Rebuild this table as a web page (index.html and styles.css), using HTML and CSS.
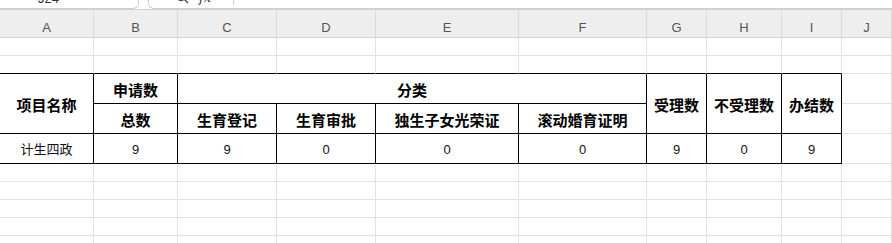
FILE: index.html
```html
<!DOCTYPE html>
<html lang="zh-CN">
<head>
    <meta charset="UTF-8">
    <title>计生四政统计表</title>
    <link rel="stylesheet" href="styles.css">
</head>
<body>

    <div class="barra">
        <div class="caixaNome">J24</div>
        <div class="caixaFormula">
            <svg class="lupa" width="14" height="14" viewBox="0 0 14 14">
                <circle cx="6" cy="6" r="4.5" fill="none" stroke="#444" stroke-width="1.3"/>
                <line x1="9.3" y1="9.3" x2="13" y2="13" stroke="#444" stroke-width="1.3"/>
            </svg>
            <span class="fx">fx</span>
            <span class="separador"></span>
        </div>
    </div>

    <div class="planilha">
        <!-- cabeçalho das colunas -->
        <div class="cab">A</div>
        <div class="cab">B</div>
        <div class="cab">C</div>
        <div class="cab">D</div>
        <div class="cab">E</div>
        <div class="cab">F</div>
        <div class="cab">G</div>
        <div class="cab">H</div>
        <div class="cab">I</div>
        <div class="cab">J</div>

        <!-- linhas vazias -->
        <div class="c"></div><div class="c"></div><div class="c"></div><div class="c"></div><div class="c"></div>
        <div class="c"></div><div class="c"></div><div class="c"></div><div class="c"></div><div class="c"></div>

        <div class="c topo"></div><div class="c topo"></div><div class="c topo"></div><div class="c topo"></div><div class="c topo"></div>
        <div class="c topo"></div><div class="c topo"></div><div class="c topo"></div><div class="c topo"></div><div class="c"></div>

        <!-- tabela -->
        <div class="c t tit dupla">项目名称</div>
        <div class="c t tit">申请数</div>
        <div class="c t tit quatro">分类</div>
        <div class="c t tit dupla">受理数</div>
        <div class="c t tit dupla">不受理数</div>
        <div class="c t tit dupla">办结数</div>
        <div class="c"></div>

        <div class="c t tit">总数</div>
        <div class="c t tit">生育登记</div>
        <div class="c t tit">生育审批</div>
        <div class="c t tit">独生子女光荣证</div>
        <div class="c t tit">滚动婚育证明</div>
        <div class="c"></div>

        <div class="c t">计生四政</div>
        <div class="c t">9</div>
        <div class="c t">9</div>
        <div class="c t">0</div>
        <div class="c t">0</div>
        <div class="c t">0</div>
        <div class="c t">9</div>
        <div class="c t">0</div>
        <div class="c t">9</div>
        <div class="c"></div>

        <div class="c"></div><div class="c"></div><div class="c"></div><div class="c"></div><div class="c"></div>
        <div class="c"></div><div class="c"></div><div class="c"></div><div class="c"></div><div class="c"></div>
        <div class="c"></div><div class="c"></div><div class="c"></div><div class="c"></div><div class="c"></div>
        <div class="c"></div><div class="c"></div><div class="c"></div><div class="c"></div><div class="c"></div>
        <div class="c"></div><div class="c"></div><div class="c"></div><div class="c"></div><div class="c"></div>
        <div class="c"></div><div class="c"></div><div class="c"></div><div class="c"></div><div class="c"></div>
        <div class="c"></div><div class="c"></div><div class="c"></div><div class="c"></div><div class="c"></div>
        <div class="c"></div><div class="c"></div><div class="c"></div><div class="c"></div><div class="c"></div>
        <div class="c"></div><div class="c"></div><div class="c"></div><div class="c"></div><div class="c"></div>
        <div class="c"></div><div class="c"></div><div class="c"></div><div class="c"></div><div class="c"></div>
    </div>

</body>
</html>
```

FILE: styles.css
```css
body{
    margin: 0;
    overflow: hidden;
    background: #fff;
    font-family: "Liberation Sans", "Noto Sans CJK SC", sans-serif;
}

/* barra de fórmula (só a parte de baixo aparece) */
.barra{
    display: flex;
    height: 30px;
    margin-top: -21px;
    gap: 9px;
}
.caixaNome,
.caixaFormula{
    box-sizing: border-box;
    height: 30px;
    border: solid 1px #d0d0d0;
    background: #fff;
    font-size: 13px;
    color: #333;
}
.caixaNome{
    width: 139px;
    border-left: none;
    border-radius: 0 0 6px 0;
    padding: 11px 0 0 38px;
}
.caixaFormula{
    flex: 1;
    border-right: none;
    border-radius: 0 0 0 6px;
    display: flex;
    align-items: flex-start;
    padding: 9px 0 0 26px;
    gap: 10px;
}
.lupa{ margin-top: 1px; }
.fx{
    font-style: italic;
    font-family: "DejaVu Serif", serif;
    font-size: 13px;
    margin-top: 1px;
}
.separador{
    width: 1px;
    height: 14px;
    margin: 2px 0 0 12px;
    background: #ccc;
}

/* grade */
.planilha{
    display: grid;
    grid-template-columns: 94px 84px 99px 99px 143px 128px 60px 75px 60px 1fr;
    grid-template-rows: 28px 18px 18px 30px 30px 30px 18px 18px 18px 18px 18px;
    border-top: solid 1px #cfcfcf;
}

.cab{
    box-sizing: border-box;
    background: #eeeeee;
    border-right: solid 1px #dadada;
    border-bottom: solid 1px #d6d6d6;
    color: #555;
    font-size: 13px;
    display: flex;
    justify-content: center;
    align-items: center;
    padding-top: 8px;
}

.c{
    box-sizing: border-box;
    border-right: solid 1px #e2e2e2;
    border-bottom: solid 1px #e2e2e2;
    display: flex;
    justify-content: center;
    align-items: center;
    line-height: 1;
    font-size: 13px;
    color: #111;
    font-family: "Liberation Sans", "Noto Sans CJK SC", sans-serif;
}
.c.topo{ border-bottom-color: #000; }
.c.t{
    border-right-color: #000;
    border-bottom-color: #000;
    padding-top: 1px;
}
.tit{
    font-family: "Noto Sans CJK SC", sans-serif;
    font-weight: bold;
    font-size: 15px;
    color: #000;
}
.dupla{ grid-row: span 2; }
.quatro{ grid-column: span 4; }
```
